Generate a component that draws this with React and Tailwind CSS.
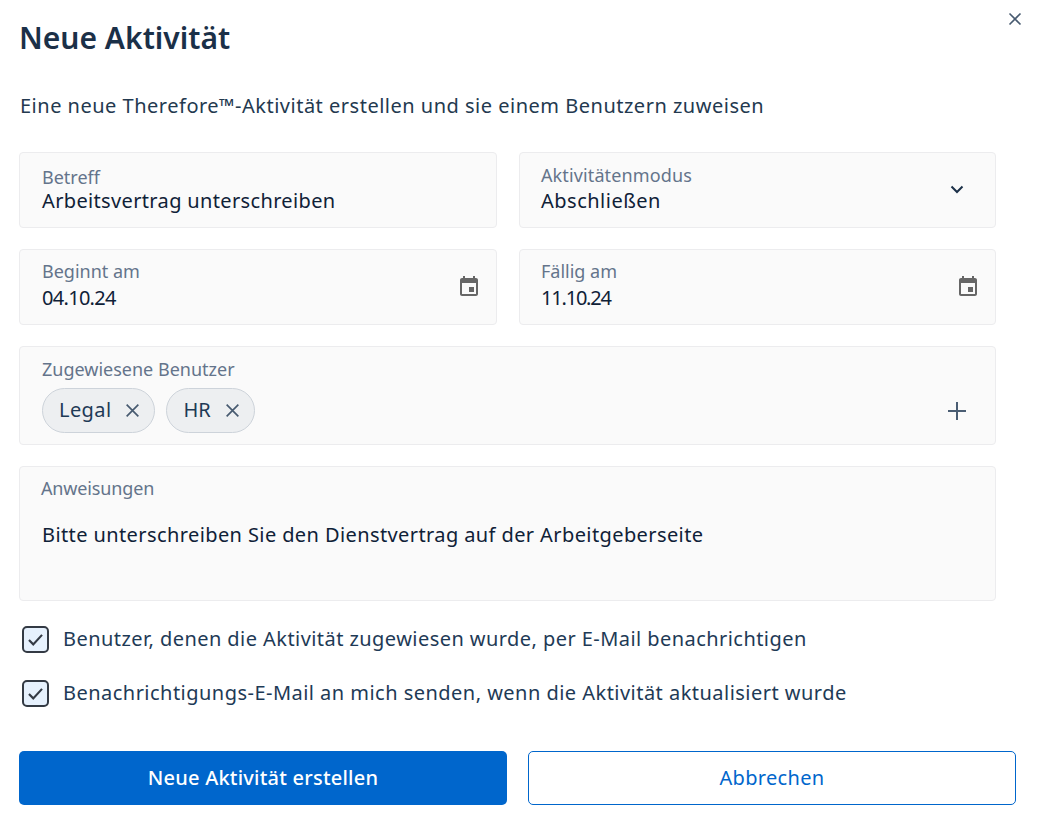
function Cal() {
  return (
    <svg viewBox="0 0 24 24" className="w-[24px] h-[24px] mb-[2px]" fill="#666">
      <path d="M19 4h-1V2h-2v2H8V2H6v2H5c-1.1 0-2 .9-2 2v14c0 1.1.9 2 2 2h14c1.1 0 2-.9 2-2V6c0-1.1-.9-2-2-2zm0 16H5V9h14v11z" />
      <rect x="12" y="13" width="5" height="5" />
    </svg>
  );
}
function X({ className }) {
  return (
    <svg viewBox="0 0 16 16" className={className} fill="none" stroke="currentColor" strokeWidth="1.6">
      <path d="M2.5 2.5l11 11M13.5 2.5l-11 11" />
    </svg>
  );
}
function Field({ label, value, icon, left, pad, valueClass, labelClass }) {
  return (
    <div className={"h-[76px] flex-1 bg-[#fafafa] border border-[#ececee] rounded-[4px] pr-[15px] flex items-center " + left}>
      <div className={"flex-1 min-w-0 self-start flex flex-col " + pad}>
        <span className={"text-[18px] leading-[24px] text-[#64748b] " + (labelClass || "")}>{label}</span>
        <span className={"text-[20px] leading-[26px] text-[#0f2137] " + valueClass}>{value}</span>
      </div>
      {icon}
    </div>
  );
}
function Chip({ label, track }) {
  return (
    <span className={"h-[45px] flex items-center gap-[13px] pl-[16px] pr-[13px] rounded-full bg-[#edeff1] border border-[#cdd3da] text-[20px] text-[#1e3a56] " + track}>
      <span className="mb-[2px]">{label}</span>
      <X className="w-[17px] h-[17px] text-[#475a70]" />
    </span>
  );
}
function Check({ label, track }) {
  return (
    <label className="flex items-center gap-[14px] pl-[3px] h-[28px]">
      <span className="w-[27px] h-[27px] rounded-[5px] border-2 border-[#333a44] bg-[#e6f1fd] flex items-center justify-center">
        <svg viewBox="0 0 16 16" className="w-[19px] h-[19px]" fill="none" stroke="#333a44" strokeWidth="1.8"><path d="M2.5 8.5l3.6 3.6 7.4-8" /></svg>
      </span>
      <span className={"text-[20px] text-[#1e3a56] " + track}>{label}</span>
    </label>
  );
}
export default function App() {
  return (
    <div className="relative w-[1039px] h-[821px] bg-white overflow-hidden pl-[19px]" style={{ fontFamily: '"Noto Sans", sans-serif' }}>
      <button className="absolute top-[11px] right-[16px] text-[#475a70]"><X className="w-[16px] h-[16px]" /></button>
      <h1 className="pt-[17px] text-[30px] leading-[42px] font-semibold text-[#1b3048]">Neue Aktivität</h1>
      <p className="mt-[34px] pl-px text-[20px] leading-[26px] tracking-[0.5px] text-[#23394f]">Eine neue Therefore™-Aktivität erstellen und sie einem Benutzern zuweisen</p>
      <div className="mt-[33px] w-[977px] flex flex-col gap-[21px]">
        <div className="flex gap-[22px]">
          <Field left="pl-[22px]" pad="pt-[12px]" valueClass="mt-[-1px] tracking-[0.35px]" label="Betreff" value="Arbeitsvertrag unterschreiben" />
          <Field left="pl-[21px]" pad="pt-[10px]" labelClass="tracking-[0.12px]" valueClass="mt-[1px] tracking-[0.5px]" label="Aktivitätenmodus" value="Abschließen" icon={
            <svg viewBox="0 0 16 16" className="w-[16px] h-[16px] mr-[15px] mb-[2px]" fill="none" stroke="#1b3048" strokeWidth="2"><path d="M2.5 5.5L8 11l5.5-5.5" /></svg>
          } />
        </div>
        <div className="flex gap-[22px]">
          <Field left="pl-[22px]" pad="pt-[9px]" valueClass="mt-[2px] tracking-[-0.7px]" label="Beginnt am" value="04.10.24" icon={<Cal />} />
          <Field left="pl-[21px]" pad="pt-[9px]" valueClass="mt-[2px] tracking-[-1.2px]" label="Fällig am" value="11.10.24" icon={<Cal />} />
        </div>
        <div className="h-[99px] bg-[#fafafa] border border-[#ececee] rounded-[4px] pl-[22px] pr-[28px] pt-[10px]">
          <div className="text-[18px] leading-[24px] text-[#64748b]">Zugewiesene Benutzer</div>
          <div className="mt-[7px] flex items-center gap-[11px]">
            <Chip label="Legal" track="tracking-[0.4px]" />
            <Chip label="HR" track="tracking-[0px]" />
            <svg viewBox="0 0 20 20" className="ml-auto w-[20px] h-[20px]" fill="none" stroke="#4a5d73" strokeWidth="2"><path d="M10 1v18M1 10h18" /></svg>
          </div>
        </div>
        <div className="h-[135px] bg-[#fafafa] border border-[#ececee] rounded-[4px] pl-[21px] pt-[9px]">
          <div className="text-[18px] leading-[24px] tracking-[-0.15px] text-[#64748b]">Anweisungen</div>
          <div className="mt-[21px] pl-px text-[20px] leading-[28px] tracking-[0.4px] text-[#0f2137]">Bitte unterschreiben Sie den Dienstvertrag auf der Arbeitgeberseite</div>
        </div>
      </div>
      <div className="mt-[24px] flex flex-col gap-[26px]">
        <Check track="tracking-[0.44px]" label="Benutzer, denen die Aktivität zugewiesen wurde, per E-Mail benachrichtigen" />
        <Check track="tracking-[0.47px]" label="Benachrichtigungs-E-Mail an mich senden, wenn die Aktivität aktualisiert wurde" />
      </div>
      <div className="mt-[44px] flex gap-[21px] w-[997px]">
        <button className="h-[54px] w-[488px] rounded-[5px] bg-[#0066cc] text-white text-[20px] tracking-[0.22px] font-medium">Neue Aktivität erstellen</button>
        <button className="h-[54px] w-[488px] rounded-[5px] bg-white border border-[#0066cc] text-[#0066cc] text-[20px] tracking-[0.33px]">Abbrechen</button>
      </div>
    </div>
  );
}
